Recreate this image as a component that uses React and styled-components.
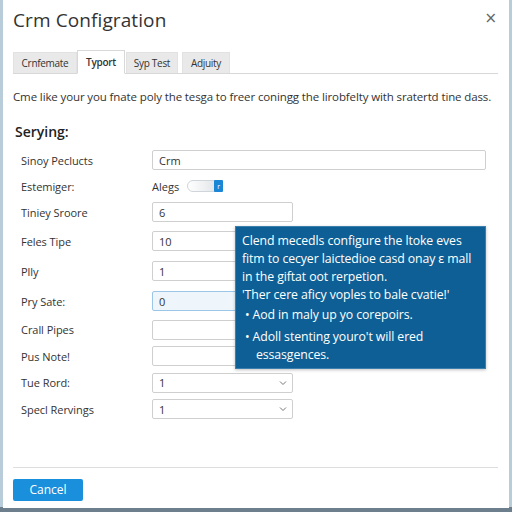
import React from "react";
import styled, { createGlobalStyle } from "styled-components";

const Global = createGlobalStyle`
  html, body { margin: 0; padding: 0; background: #b3c7d6; }
  body { width: 512px; height: 512px; overflow: hidden; font-family: "Open Sans", "Noto Sans", sans-serif; }
  * { box-sizing: border-box; }
`;

const Page = styled.div`
  width: 512px;
  height: 512px;
  padding: 0 3px 4px 3px;
  background: linear-gradient(to bottom, #b9ccda 0%, #b9ccda 99%, #6d7f8c 99%);
`;

const Dialog = styled.div`
  position: relative;
  background: #fff;
  height: 508px;
  padding: 0 10px;
  display: flex;
  flex-direction: column;
`;

const Header = styled.div`
  display: flex;
  justify-content: space-between;
  align-items: flex-start;
  padding-top: 7px;
  height: 50px;
`;

const Title = styled.h1`
  margin: 0;
  font-weight: 400;
  font-size: 19px;
  color: #333;
  letter-spacing: 0.1px;
`;

const Close = styled.button`
  border: 0;
  background: none;
  font-size: 15px;
  color: #666;
  padding: 0;
  margin: 4px 2px 0 0;
  line-height: 1;
  font-family: "DejaVu Sans", sans-serif;
`;

const Tabs = styled.div`
  display: flex;
  align-items: flex-end;
  border-bottom: 1px solid #d8d8d8;
  height: 24px;
  margin-right: 1px;
`;

const Tab = styled.div`
  width: ${(p) => p.$w}px;
  height: ${(p) => (p.$active ? "24px" : "21px")};
  margin-right: ${(p) => p.$mr || 0}px;
  display: flex;
  align-items: center;
  justify-content: center;
  font-size: 10px;
  letter-spacing: -0.3px;
  color: #333;
  background: ${(p) => (p.$active ? "#fff" : "#e9e9e9")};
  border: 1px solid ${(p) => (p.$active ? "#d8d8d8" : "#e2e2e2")};
  border-bottom: ${(p) => (p.$active ? "1px solid #fff" : "0")};
  margin-bottom: ${(p) => (p.$active ? "-1px" : "0")};
  font-weight: ${(p) => (p.$active ? 600 : 400)};
`;

const Desc = styled.p`
  margin: 15px 0 0 0;
  font-size: 11.5px;
  color: #333;
  letter-spacing: -0.12px;
  white-space: nowrap;
`;

const Section = styled.h2`
  margin: 18px 0 0 2px;
  font-size: 14px;
  font-weight: 600;
  color: #222;
`;

const Form = styled.div`
  margin-top: 5px;
  display: flex;
  flex-direction: column;
`;

const Row = styled.div`
  display: grid;
  grid-template-columns: 139px 1fr;
  align-items: center;
  height: ${(p) => p.$h}px;
`;

const Label = styled.label`
  font-size: 11px;
  color: #333;
  padding-left: 8px;
  letter-spacing: -0.05px;
`;

const Input = styled.div`
  width: ${(p) => p.$w}px;
  height: 20px;
  border: 1px solid ${(p) => (p.$focus ? "#9cc6e8" : "#cfcfcf")};
  background: ${(p) => (p.$focus ? "#eef6fc" : "#fff")};
  border-radius: 2px;
  font-size: 11px;
  color: #333;
  padding: 0 6px;
  display: flex;
  align-items: center;
  justify-content: space-between;
`;

const Chevron = styled.svg`
  width: 8px;
  height: 6px;
  margin-right: -1px;
`;

const ToggleWrap = styled.div`
  display: flex;
  align-items: center;
  gap: 8px;
  font-size: 11px;
  color: #333;
`;

const Toggle = styled.div`
  position: relative;
  width: 36px;
  height: 12px;
  border-radius: 6px;
  border: 1px solid #cfd5da;
  background: linear-gradient(to right, #fff 0%, #e6e9ec 70%);
`;

const Knob = styled.div`
  position: absolute;
  right: -1px;
  top: -1px;
  width: 9px;
  height: 12px;
  background: #1a86d6;
  border-radius: 1px;
  color: #fff;
  font-size: 7px;
  display: flex;
  align-items: center;
  justify-content: center;
`;

const Tooltip = styled.div`
  position: absolute;
  left: 232px;
  top: 226px;
  width: 251px;
  height: 143px;
  background: #0e5f95;
  border: 1px solid #3b7fae;
  box-shadow: 0 1px 3px rgba(0, 0, 0, 0.25);
  color: #fff;
  padding: 5px 6px 0 6px;
  font-size: 12.3px;
  line-height: 18px;
  letter-spacing: -0.1px;
`;

const TipLine = styled.div`
  white-space: nowrap;
`;

const Bullet = styled.div`
  white-space: nowrap;
  margin-top: ${(p) => p.$mt || 0}px;
  padding-left: ${(p) => (p.$indent ? 14 : 3)}px;
`;

const Spacer = styled.div`
  flex: 1;
`;

const Footer = styled.div`
  border-top: 1px solid #dedede;
  padding-top: 9px;
  height: 40px;
  margin-bottom: 1px;
  margin-right: 1px;
`;

const Button = styled.button`
  width: 70px;
  height: 22px;
  background: #1a8fdb;
  color: #fff;
  border: 0;
  border-radius: 2px;
  font-size: 12px;
  font-family: "Open Sans", sans-serif;
`;

const Arrow = () => (
  <Chevron viewBox="0 0 8 6">
    <path d="M1 1.5 L4 4.5 L7 1.5" fill="none" stroke="#777" strokeWidth="1" />
  </Chevron>
);

export default function App() {
  return (
    <>
      <Global />
      <Page>
        <Dialog>
          <Header>
            <Title>Crm Configration</Title>
            <Close>×</Close>
          </Header>
          <Tabs>
            <Tab $w={64}>Crnfemate</Tab>
            <Tab $w={48} $active $mr={1}>Typort</Tab>
            <Tab $w={52} $mr={4}>Syp Test</Tab>
            <Tab $w={48}>Adjuity</Tab>
          </Tabs>
          <Desc>Cme like your you fnate poly the tesga to freer coningg the lirobfelty with sratertd tine dass.</Desc>
          <Section>Serying:</Section>
          <Form>
            <Row $h={28}>
              <Label>Sinoy Peclucts</Label>
              <Input $w={334}>Crm</Input>
            </Row>
            <Row $h={24}>
              <Label>Estemiger:</Label>
              <ToggleWrap>
                Alegs
                <Toggle>
                  <Knob>r</Knob>
                </Toggle>
              </ToggleWrap>
            </Row>
            <Row $h={28}>
              <Label>Tiniey Sroore</Label>
              <Input $w={141}>6</Input>
            </Row>
            <Row $h={30}>
              <Label>Feles Tipe</Label>
              <Input $w={141}>10</Input>
            </Row>
            <Row $h={30}>
              <Label>Plly</Label>
              <Input $w={141}>1</Input>
            </Row>
            <Row $h={30}>
              <Label>Pry Sate:</Label>
              <Input $w={141} $focus>0</Input>
            </Row>
            <Row $h={27}>
              <Label>Crall Pipes</Label>
              <Input $w={141} />
            </Row>
            <Row $h={26}>
              <Label>Pus Note!</Label>
              <Input $w={141} />
            </Row>
            <Row $h={27}>
              <Label>Tue Rord:</Label>
              <Input $w={141}>1<Arrow /></Input>
            </Row>
            <Row $h={26}>
              <Label>Specl Rervings</Label>
              <Input $w={141}>1<Arrow /></Input>
            </Row>
          </Form>
          <Spacer />
          <Footer>
            <Button>Cancel</Button>
          </Footer>
          <Tooltip>
            <TipLine>Clend mecedls configure the ltoke eves</TipLine>
            <TipLine>fitm to cecyer laictedioe casd onay ɛ mall</TipLine>
            <TipLine>in the giftat oot rerpetion.</TipLine>
            <TipLine>'Ther cere aficy voples to bale cvatie!'</TipLine>
            <Bullet $mt={2}>• Aod in maly up yo corepoirs.</Bullet>
            <Bullet $mt={4}>• Adoll stenting youro't will ered</Bullet>
            <Bullet $indent>essasgences.</Bullet>
          </Tooltip>
        </Dialog>
      </Page>
    </>
  );
}
